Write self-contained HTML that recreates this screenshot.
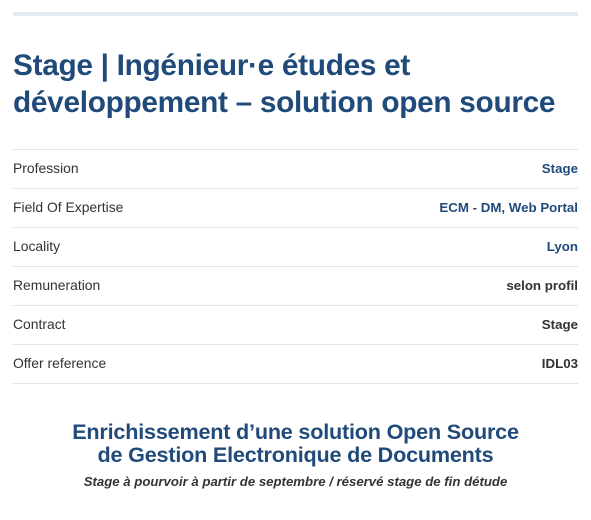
<!DOCTYPE html>
<html><head><meta charset="utf-8"><style>
body{margin:0;background:#fff;font-family:"Liberation Sans",sans-serif;width:591px;height:520px;overflow:hidden;position:relative}
.bar{position:absolute;left:13px;top:12px;width:565px;height:4px;background:#e5eaf0}
h1{position:absolute;left:13px;top:47px;margin:0;font-size:29.8px;line-height:37px;color:#1f4a7a;font-weight:bold;letter-spacing:-0.3px;white-space:nowrap}
.tbl{position:absolute;left:13px;top:149px;width:565px;border-top:1px solid #e3e3e3}
.row{height:38px;border-bottom:1px solid #e3e3e3;display:flex;justify-content:space-between;align-items:center;font-size:13.9px;color:#333}
.row span{margin-top:-2px}
.row b{font-size:13.3px;margin-top:-2px}
.blue{color:#1f4a7a}
.sub{position:absolute;left:0;width:591px;text-align:center;top:420px;font-size:21.6px;line-height:23px;color:#1f4a7a;font-weight:bold;letter-spacing:-0.2px}
.it{position:absolute;left:0;width:591px;text-align:center;top:474px;font-size:13.2px;font-style:italic;font-weight:bold;color:#333}
</style></head><body>
<div class="bar"></div>
<h1>Stage | Ingénieur·e études et<br>développement – solution open source</h1>
<div class="tbl">
<div class="row"><span>Profession</span><b class="blue">Stage</b></div>
<div class="row"><span>Field Of Expertise</span><b class="blue">ECM - DM, Web Portal</b></div>
<div class="row"><span>Locality</span><b class="blue">Lyon</b></div>
<div class="row"><span>Remuneration</span><b>selon profil</b></div>
<div class="row"><span>Contract</span><b>Stage</b></div>
<div class="row"><span>Offer reference</span><b>IDL03</b></div>
</div>
<div class="sub">Enrichissement d’une solution Open Source<br>de Gestion Electronique de Documents</div>
<div class="it">Stage à pourvoir à partir de septembre / réservé stage de fin détude</div>
</body></html>
